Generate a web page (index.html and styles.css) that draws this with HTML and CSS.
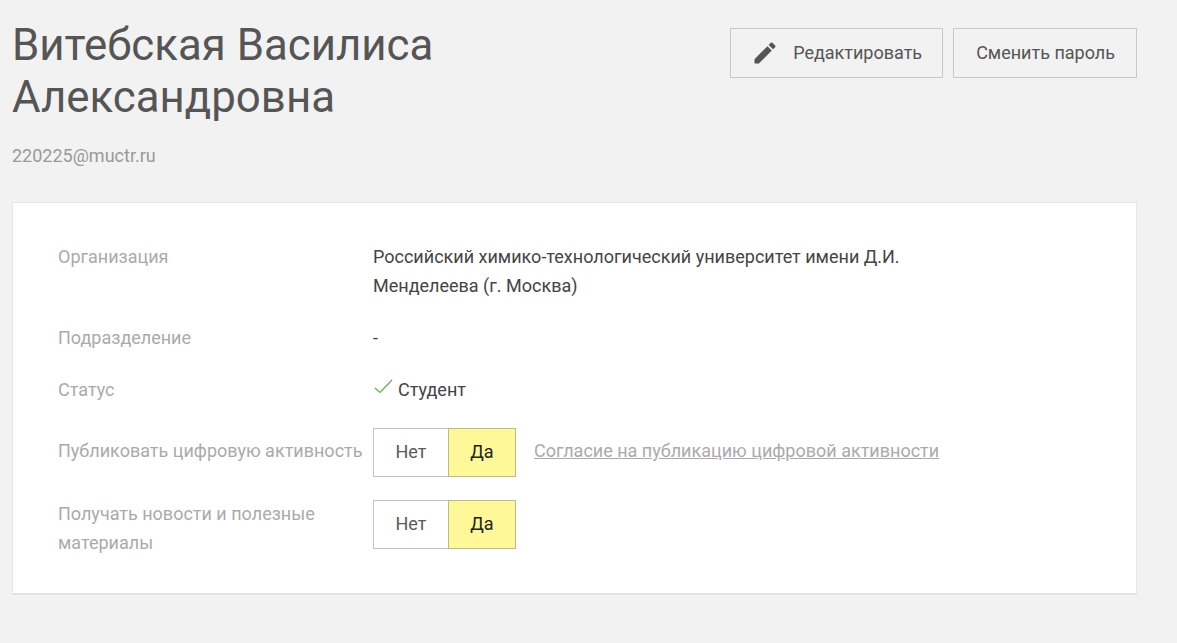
FILE: index.html
```html
<!DOCTYPE html>
<html>
<head>
  <meta charset="UTF-8">
  <title>Профиль</title>
  <link rel="stylesheet" href="styles.css">
</head>
<body>
  <div class="page">
    <div class="top">
      <div>
        <h1>Витебская Василиса Александровна</h1>
        <div class="email">220225@muctr.ru</div>
      </div>
      <div class="actions">
        <a class="btn btn-edit">
          <svg width="28" height="28" viewBox="0 0 24 24"><path d="M3 17.25V21h3.75L17.81 9.94l-3.75-3.75L3 17.25zM20.71 7.04a1 1 0 0 0 0-1.41l-2.34-2.34a1 1 0 0 0-1.41 0l-1.83 1.83 3.75 3.75 1.83-1.83z"/></svg>
          Редактировать
        </a>
        <a class="btn btn-pass">Сменить пароль</a>
      </div>
    </div>

    <div class="card">
      <div class="row row-org">
        <div class="label">Организация</div>
        <div class="value">Российский химико-технологический университет имени Д.И. Менделеева (г. Москва)</div>
      </div>
      <div class="row row-dep">
        <div class="label">Подразделение</div>
        <div class="value">-</div>
      </div>
      <div class="row row-status">
        <div class="label">Статус</div>
        <div class="value status">
          <svg width="20" height="16" viewBox="0 0 20 16"><path d="M1 9l5 4.500L18 1" fill="none" stroke="#6aa84f" stroke-width="1.2"/></svg>
          Студент
        </div>
      </div>
      <div class="row row-switch">
        <div class="label">Публиковать цифровую активность</div>
        <div class="switch"><span class="off">Нет</span><span class="on">Да</span></div>
        <a class="consent">Согласие на публикацию цифровой активности</a>
      </div>
      <div class="row row-news">
        <div class="label">Получать новости и полезные материалы</div>
        <div class="switch"><span class="off">Нет</span><span class="on">Да</span></div>
      </div>
    </div>
  </div>
</body>
</html>
```

FILE: styles.css
```css
body { font-family: Roboto, Arial, sans-serif; background: #f2f2f2; margin: 0; color: #444; }
.page { width: 1125px; margin-left: 12px; padding-top: 19px; }
.top { display: flex; justify-content: space-between; align-items: flex-start; }
h1 {
  font-size: 43.8px;
  font-weight: 400;
  line-height: 52px;
  color: #555;
  margin: 0;
  width: 500px;
}
.email { font-size: 18px; color: #999; margin-top: 23px; line-height: 20px; }
.actions { display: flex; gap: 10px; margin-top: 9px; }
.btn {
  display: flex;
  align-items: center;
  height: 50px;
  box-sizing: border-box;
  padding: 0 22px 2px;
  border: 1px solid #c8c8c8;
  font-size: 18px;
  color: #555;
}
.btn-pass { padding-right: 21px; }
.btn-edit { padding-left: 20px; padding-right: 20px; }
.btn-edit svg { fill: #555; margin-right: 14px; margin-top: 2px; }

.card {
  background: white;
  border: 1px solid #e6e6e6;
  border-bottom: 2px solid #e2e2e2;
  margin-top: 36px;
  padding: 39px 45px 36px;
  font-size: 18px;
  line-height: 29px;
}
.row { display: flex; align-items: center; }
.label { width: 315px; flex: none; color: #aaa; box-sizing: border-box; padding-right: 5px; }
.value { width: 560px; color: #444; }
.row-org { align-items: flex-start; }
.row-dep { margin-top: 23px; }
.row-status { margin-top: 23px; }
.row-switch { margin-top: 24px; }
.row-switch .label, .consent { margin-bottom: 4px; }
.row-news { margin-top: 23px; align-items: flex-start; }
.row-news .label { margin-top: -1px; }
.status { display: flex; align-items: center; gap: 5px; }
.status svg { margin-top: -5px; margin-left: 1px; margin-right: -1px; }
.switch { display: flex; height: 49px; width: 143px; flex: none; box-sizing: border-box; border: 1px solid #c4c4c4; }
.switch span { display: flex; align-items: center; justify-content: center; padding-bottom: 2px; box-sizing: border-box; }
.off { width: 74px; background: white; color: #5a5a5a; }
.on { flex: 1; background: #fff899; color: #222; border: 1px solid #bdb98a; margin: -1px -1px -1px 0; }
.consent { margin-left: 18px; color: #aaa; text-decoration: underline; }
```
